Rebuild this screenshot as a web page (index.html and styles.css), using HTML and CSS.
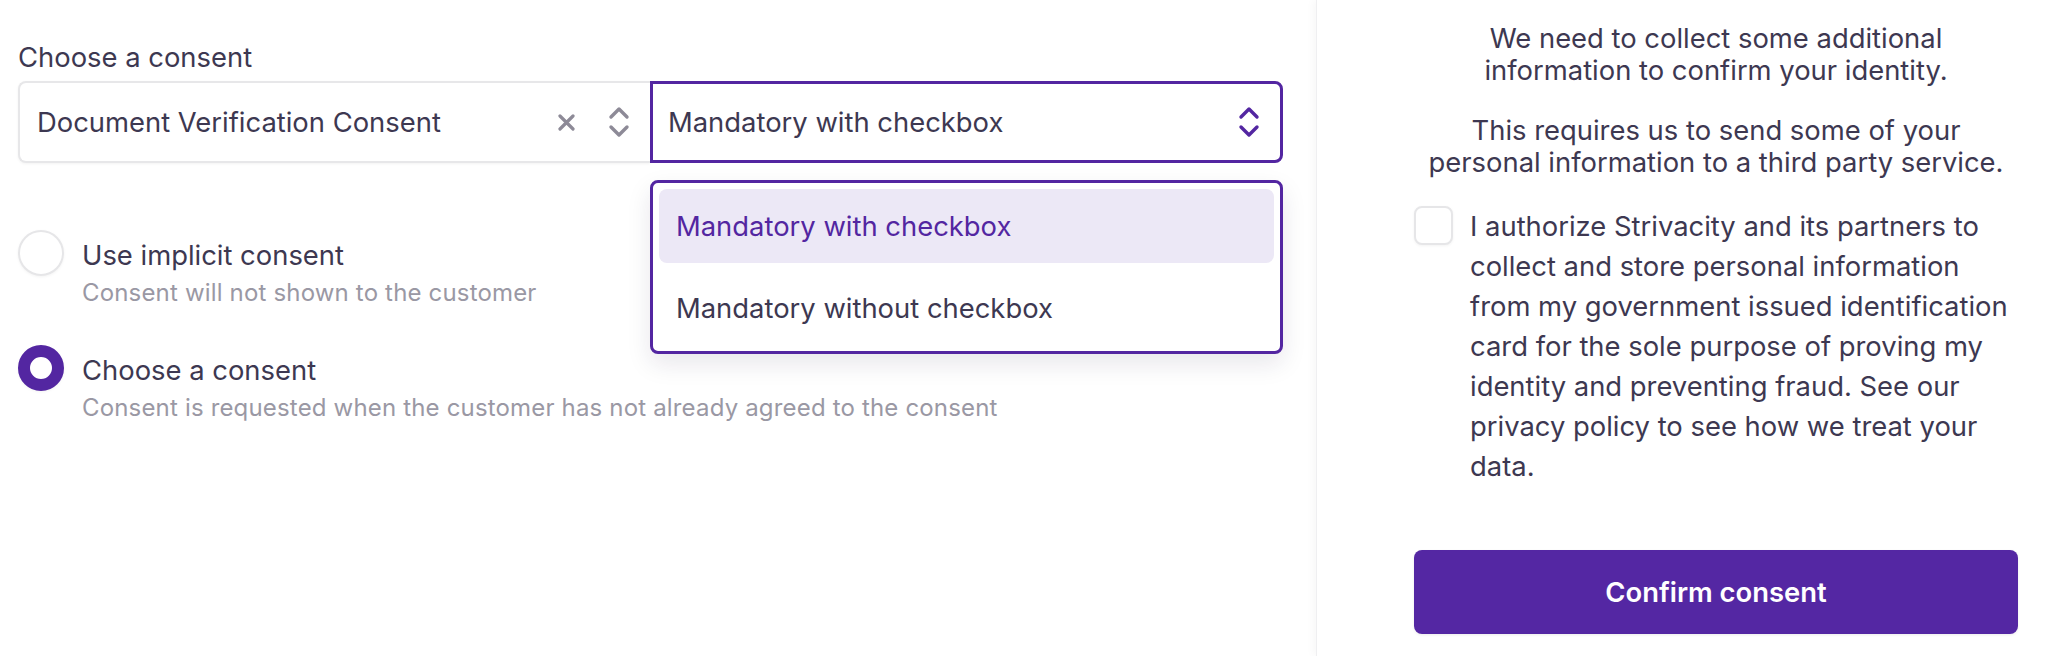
FILE: index.html
```html
<!DOCTYPE html>
<html lang="en">
<head>
<meta charset="utf-8">
<title>Consent</title>
<link rel="stylesheet" href="styles.css">
</head>
<body>
<div class="page">
  <section class="editor">
    <div class="field-label">Choose a consent</div>
    <div class="select-row">
      <div class="select select-consent">
        <span class="select-value">Document Verification Consent</span>
        <span class="select-icons">
          <svg class="icon-clear" width="17" height="17" viewBox="0 0 17 17"><path d="M2 2 L15 15 M15 2 L2 15" fill="none" stroke="#8d8a97" stroke-width="3.2" stroke-linecap="round"/></svg>
          <svg class="icon-updown" width="22" height="32" viewBox="0 0 22 32"><path d="M3 11 L11 3 L19 11 M3 21 L11 29 L19 21" fill="none" stroke="#8d8a97" stroke-width="3.4" stroke-linecap="round" stroke-linejoin="round"/></svg>
        </span>
      </div>
      <div class="select-wrap">
        <div class="select select-mode">
          <span class="select-value">Mandatory with checkbox</span>
          <svg class="icon-updown" width="22" height="32" viewBox="0 0 22 32"><path d="M3 11 L11 3 L19 11 M3 21 L11 29 L19 21" fill="none" stroke="#5326a1" stroke-width="3.4" stroke-linecap="round" stroke-linejoin="round"/></svg>
        </div>
        <ul class="menu">
          <li class="menu-item active">Mandatory with checkbox</li>
          <li class="menu-item">Mandatory without checkbox</li>
        </ul>
      </div>
    </div>

    <div class="options">
      <div class="option">
        <span class="radio"></span>
        <div class="option-text">
          <div class="option-title">Use implicit consent</div>
          <div class="option-desc">Consent will not shown to the customer</div>
        </div>
      </div>
      <div class="option">
        <span class="radio checked"></span>
        <div class="option-text">
          <div class="option-title">Choose a consent</div>
          <div class="option-desc">Consent is requested when the customer has not already agreed to the consent</div>
        </div>
      </div>
    </div>
  </section>

  <aside class="preview">
    <div class="preview-inner">
      <p class="intro">We need to collect some additional<br>information to confirm your identity.</p>
      <p class="intro">This requires us to send some of your<br>personal information to a third party service.</p>
      <label class="agree">
        <span class="checkbox"></span>
        <span class="agree-text">I authorize Strivacity and its partners to<br>collect and store personal information<br>from my government issued identification<br>card for the sole purpose of proving my<br>identity and preventing fraud. See our<br>privacy policy to see how we treat your<br>data.</span>
      </label>
      <button class="confirm" type="button">Confirm consent</button>
    </div>
  </aside>
</div>
</body>
</html>
```

FILE: styles.css
```css
* { box-sizing: border-box; }
html, body { margin: 0; padding: 0; background: #ffffff; }
body {
  font-family: Inter, "Noto Sans", "Liberation Sans", sans-serif;
  color: #3d3851;
  font-size: 27.4px;
  width: 2048px;
  height: 656px;
  overflow: hidden;
}
.page {
  display: flex;
  height: 656px;
}

/* left editor */
.editor {
  width: 1316px;
  flex-shrink: 0;
  padding: 39px 33px 0 18px;
}
.field-label {
  line-height: 36px;
  margin-bottom: 6px;
}
.select-row {
  display: flex;
  height: 82px;
}
.select {
  display: flex;
  align-items: center;
  height: 82px;
  background: #fff;
}
.select-consent {
  width: 632px;
  border: 2px solid #e7e7e9;
  border-right: none;
  border-radius: 8px 0 0 8px;
  padding: 0 20px 0 17px;
  box-shadow: 0 1px 3px rgba(0,0,0,0.05);
}
.select-value {
  flex: 1;
  white-space: nowrap;
}
.select-icons {
  display: flex;
  align-items: center;
  gap: 33px;
}
.icon-clear { display: block; }
.icon-updown { display: block; }
.select-wrap {
  position: relative;
  width: 633px;
}
.select-mode {
  border: 3px solid #5326a1;
  border-radius: 0 8px 8px 0;
  padding: 0 20px 0 15px;
}
.menu {
  position: absolute;
  left: 0;
  top: 99px;
  width: 633px;
  margin: 0;
  padding: 6px;
  list-style: none;
  border: 3px solid #5326a1;
  border-radius: 8px;
  background: #fff;
  box-shadow: 0 10px 24px rgba(30,20,60,0.10);
  display: flex;
  flex-direction: column;
  gap: 8px;
  z-index: 2;
}
.menu-item {
  height: 74px;
  display: flex;
  align-items: center;
  padding: 0 17px;
  border-radius: 8px;
}
.menu-item.active {
  background: #ece8f6;
  color: #5326a1;
}

.options {
  margin-top: 67px;
  display: flex;
  flex-direction: column;
  gap: 36px;
}
.option {
  display: flex;
  align-items: flex-start;
  gap: 18px;
}
.radio {
  width: 46px;
  height: 46px;
  flex-shrink: 0;
  border-radius: 50%;
  border: 2px solid #e6e6e8;
  box-shadow: 0 1px 3px rgba(0,0,0,0.05);
  background: #fff;
}
.radio.checked {
  border: 12px solid #5326a1;
  background: #fff;
}
.option-text {
  padding-top: 7px;
}
.option-title {
  line-height: 36px;
}
.option-desc {
  margin-top: 4px;
  font-size: 24px;
  letter-spacing: 0.17px;
  line-height: 32px;
  color: #9a98a4;
}

/* right preview */
.preview {
  flex: 1;
  border-left: 1px solid #efeff1;
  box-shadow: -3px 0 8px rgba(0,0,0,0.03);
  padding: 22px 30px 0 97px;
}
.preview-inner {
  display: flex;
  flex-direction: column;
}
.intro {
  margin: 0 0 28px;
  text-align: center;
  line-height: 32px;
  white-space: nowrap;
}
.agree {
  display: flex;
  align-items: flex-start;
  gap: 17px;
}
.checkbox {
  width: 39px;
  height: 39px;
  flex-shrink: 0;
  border: 2px solid #e6e6e8;
  border-radius: 8px;
  box-shadow: 0 1px 3px rgba(0,0,0,0.05);
  background: #fff;
}
.agree-text {
  line-height: 40px;
  white-space: nowrap;
}
.confirm {
  margin-top: 64px;
  height: 84px;
  border: none;
  border-radius: 8px;
  background: #5427a3;
  color: #fff;
  font-family: inherit;
  font-size: 27.4px;
  font-weight: 600;
  box-shadow: 0 1px 3px rgba(0,0,0,0.08);
}
```
